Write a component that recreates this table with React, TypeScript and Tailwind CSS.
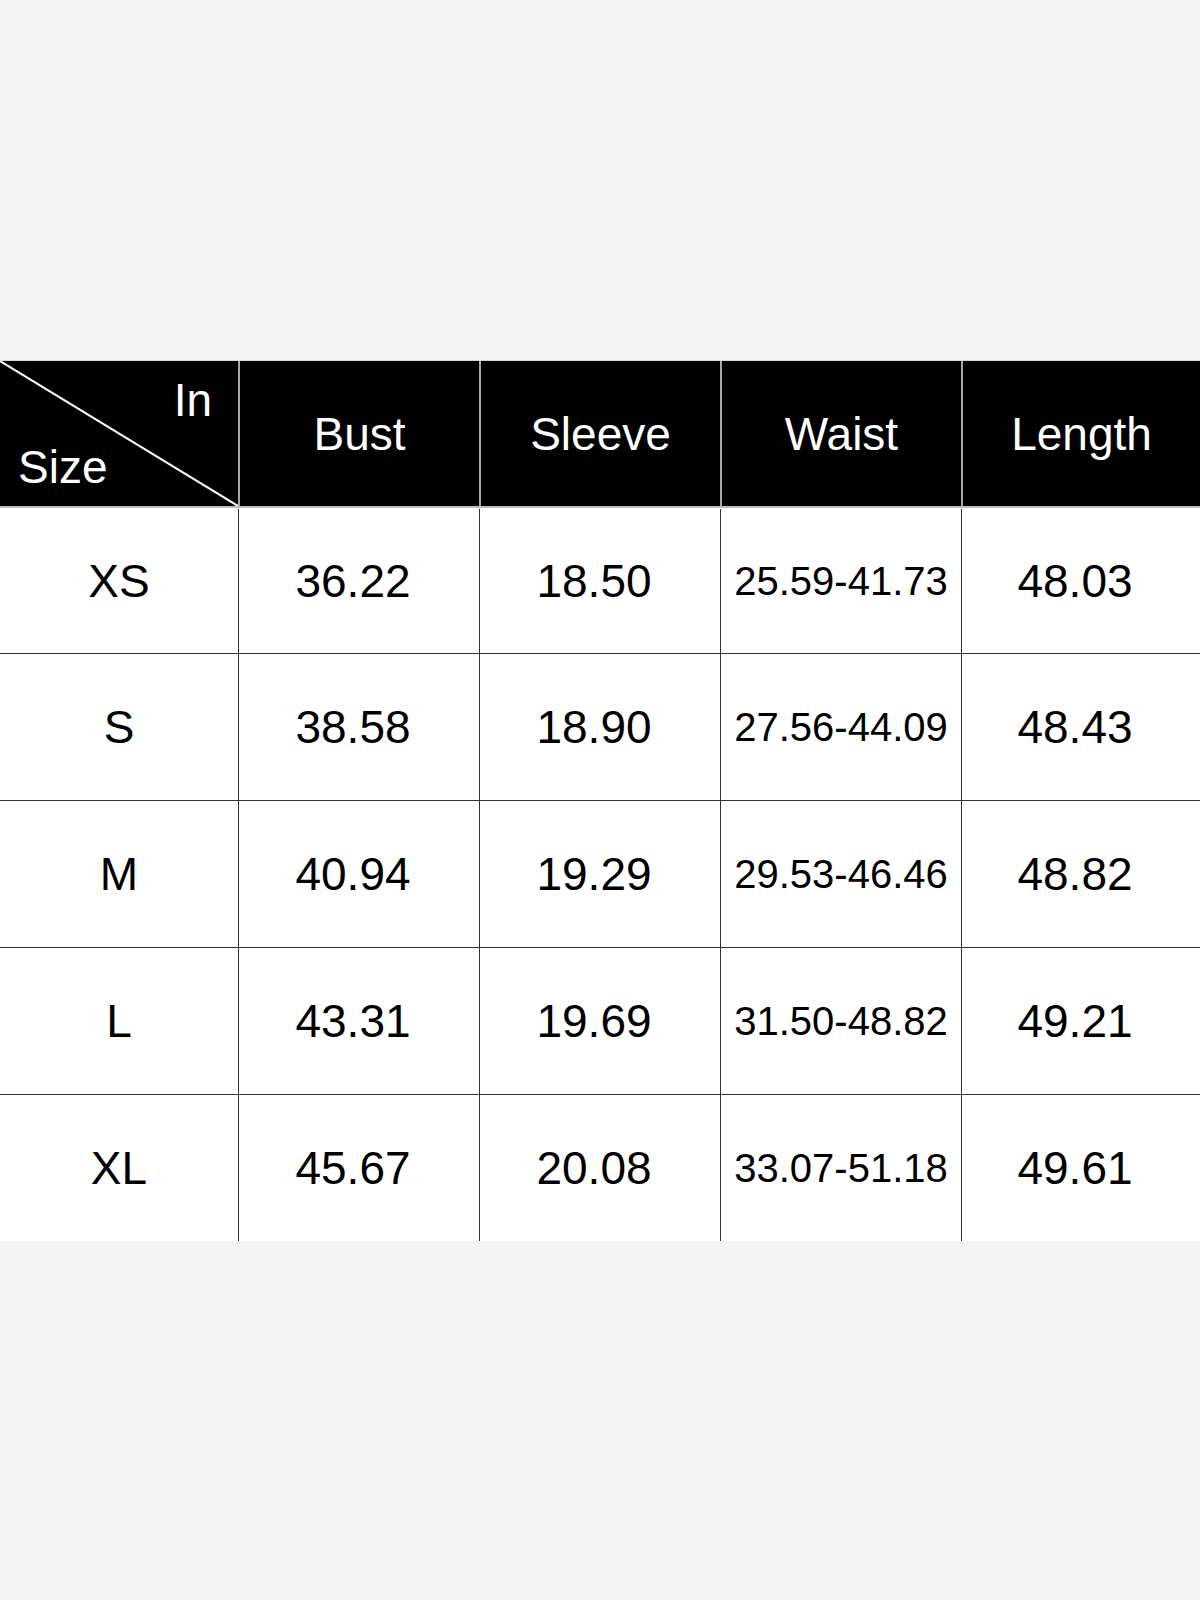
import React from "react";

const rows = [
  ["XS", "36.22", "18.50", "25.59-41.73", "48.03"],
  ["S", "38.58", "18.90", "27.56-44.09", "48.43"],
  ["M", "40.94", "19.29", "29.53-46.46", "48.82"],
  ["L", "43.31", "19.69", "31.50-48.82", "49.21"],
  ["XL", "45.67", "20.08", "33.07-51.18", "49.61"],
];

const heads = ["Bust", "Sleeve", "Waist", "Length"];

export default function App() {
  return (
    <div
      className="min-h-[1600px] w-[1200px] bg-[#f4f4f4] pt-[360px] flex flex-col"
      style={{ fontFamily: '"Liberation Sans", Arial, sans-serif' }}
    >
      <div className="border-t border-[#d6d6d6]" />
      <div className="grid grid-cols-[238px_241px_241px_241px_1fr] h-[147px] bg-black text-white border-b-2 border-[#bdbdbd]">
        <div className="relative">
          <svg className="absolute inset-0" width="238" height="145" viewBox="0 0 238 145">
            <line x1="0" y1="0" x2="238" y2="145" stroke="#ffffff" strokeWidth="2" />
          </svg>
          <span className="absolute right-[26px] top-[16px] text-[46px] leading-none">In</span>
          <span className="absolute left-[18px] top-[83px] text-[46px] leading-none">Size</span>
        </div>
        {heads.map((h) => (
          <div
            key={h}
            className="flex items-center justify-center border-l-2 border-[#a8a8a8] text-[46px] leading-none"
          >
            {h}
          </div>
        ))}
      </div>
      {rows.map((r, i) => (
        <div
          key={r[0]}
          className={
            "grid grid-cols-[238px_241px_241px_241px_1fr] bg-white text-black " +
            (i > 0 ? "h-[147px] border-t-[1.5px] border-[#333333]" : "h-[145px] pt-[1px]")
          }
        >
          {r.map((c, j) => (
            <div
              key={j}
              className={
                "flex items-center justify-center leading-none " +
                (j > 0 ? "border-l-[1.5px] border-[#333333] " : "") +
                (j === 3 ? "text-[40px]" : "text-[46px]")
              }
            >
              <span className={j === 0 || j === 3 ? "" : "mr-[12px]"}>{c}</span>
            </div>
          ))}
        </div>
      ))}
    </div>
  );
}
